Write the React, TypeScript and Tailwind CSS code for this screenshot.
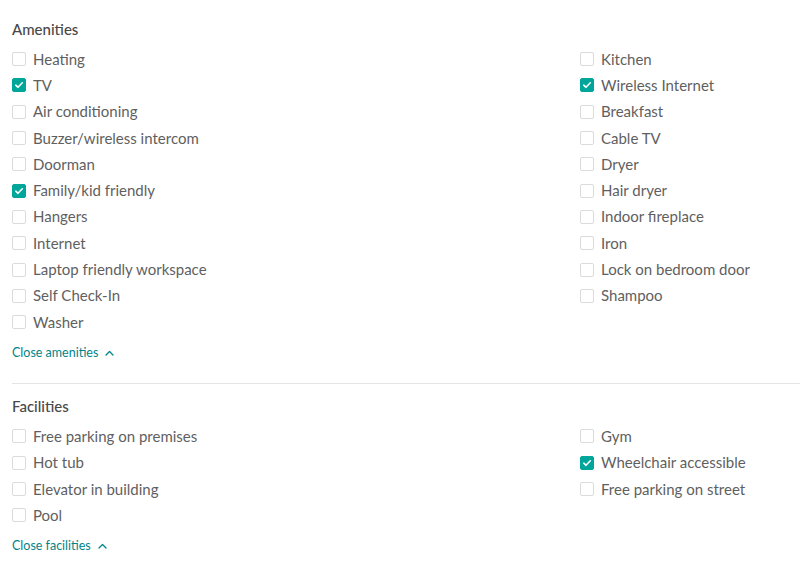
import { useState } from "react";

const amenities = {
  left: [
    ["Heating", false],
    ["TV", true],
    ["Air conditioning", false],
    ["Buzzer/wireless intercom", false],
    ["Doorman", false],
    ["Family/kid friendly", true],
    ["Hangers", false],
    ["Internet", false],
    ["Laptop friendly workspace", false],
    ["Self Check-In", false],
    ["Washer", false],
  ],
  right: [
    ["Kitchen", false],
    ["Wireless Internet", true],
    ["Breakfast", false],
    ["Cable TV", false],
    ["Dryer", false],
    ["Hair dryer", false],
    ["Indoor fireplace", false],
    ["Iron", false],
    ["Lock on bedroom door", false],
    ["Shampoo", false],
  ],
} as const;

const facilities = {
  left: [
    ["Free parking on premises", false],
    ["Hot tub", false],
    ["Elevator in building", false],
    ["Pool", false],
  ],
  right: [
    ["Gym", false],
    ["Wheelchair accessible", true],
    ["Free parking on street", false],
  ],
} as const;

const Checkbox = ({ label, initial }: { label: string; initial: boolean }) => {
  const [checked, setChecked] = useState(initial);
  return (
    <label className="flex h-[26.3px] cursor-pointer items-center">
      <span
        onClick={() => setChecked(c => !c)}
        className={`flex h-[14px] w-[14px] shrink-0 items-center justify-center rounded-[2px] border ${
          checked ? "border-[#00a699] bg-[#00a699]" : "border-[#dbdbdb] bg-white"
        }`}
      >
        {checked && (
          <svg width="10" height="10" viewBox="0 0 10 10" fill="none">
            <path d="M1.8 5.2 L4 7.3 L8.3 2.8" stroke="white" strokeWidth="1.6" strokeLinecap="round" strokeLinejoin="round" />
          </svg>
        )}
      </span>
      <span className="ml-[7px] text-[15px] leading-none text-[#5f5f5f]">{label}</span>
    </label>
  );
};

const Section = ({
  title,
  data,
  toggle,
}: {
  title: string;
  data: { left: readonly (readonly [string, boolean])[]; right: readonly (readonly [string, boolean])[] };
  toggle: string;
}) => (
  <div>
    <h3 className="flex h-[22px] items-center text-[15px] font-medium text-[#484848]">{title}</h3>
    <div className="mt-[6px] grid grid-cols-[568px_1fr]">
      <div>
        {data.left.map(([l, c]) => (
          <Checkbox key={l} label={l} initial={c} />
        ))}
      </div>
      <div>
        {data.right.map(([l, c]) => (
          <Checkbox key={l} label={l} initial={c} />
        ))}
      </div>
    </div>
    <button className="mt-[9px] flex h-[18px] items-center gap-[7px] text-[12.5px] text-[#008489]">
      {toggle}
      <svg width="9" height="6" viewBox="0 0 9 6" fill="none">
        <path d="M1 5 L4.5 1.5 L8 5" stroke="#008489" strokeWidth="1.3" strokeLinecap="round" strokeLinejoin="round" />
      </svg>
    </button>
  </div>
);

export default function App() {
  return (
    <div className="min-h-[574px] bg-white pl-3 pt-[18px] font-['Lato','Open_Sans',sans-serif]">
      <div className="pb-[21px]">
        <Section title="Amenities" data={amenities} toggle="Close amenities" />
      </div>
      <div className="border-t border-[#e4e4e4] pt-[11px]">
        <Section title="Facilities" data={facilities} toggle="Close facilities" />
      </div>
    </div>
  );
}
